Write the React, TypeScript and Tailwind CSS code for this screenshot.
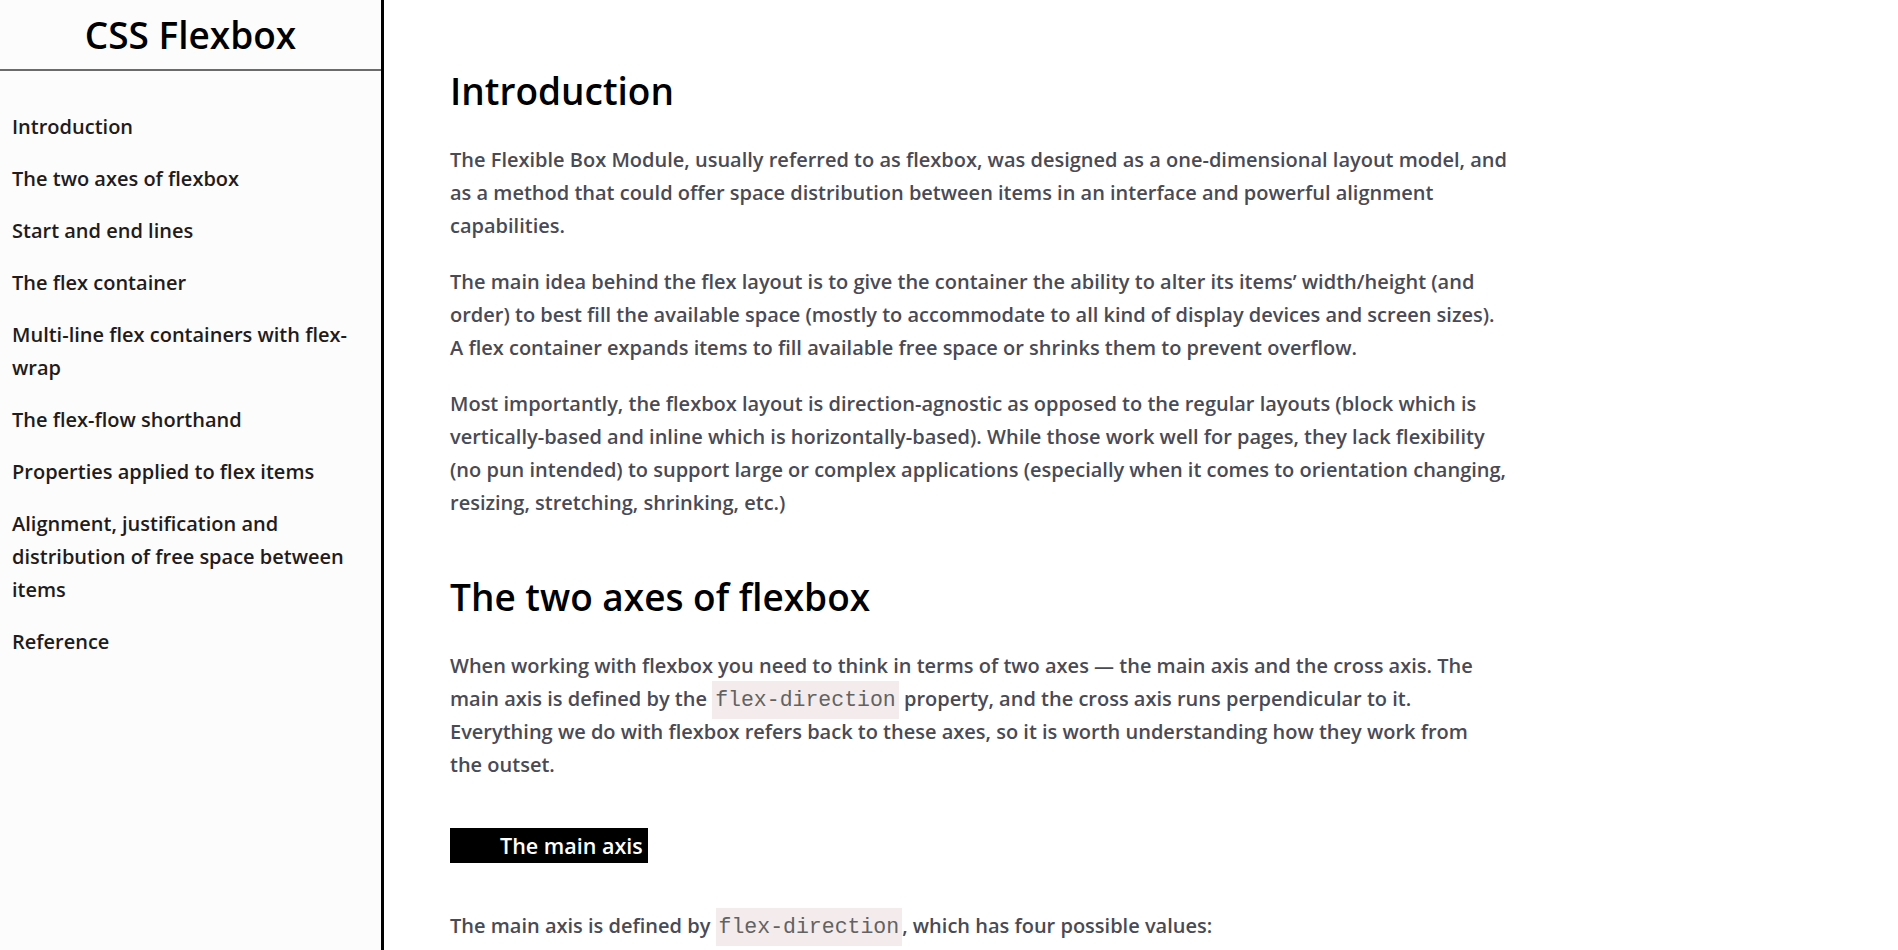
import React from "react";

const navItems = [
	"Introduction",
	"The two axes of flexbox",
	"Start and end lines",
	"The flex container",
	"Multi-line flex containers with flex-wrap",
	"The flex-flow shorthand",
	"Properties applied to flex items",
	"Alignment, justification and distribution of free space between items",
	"Reference",
];

const Code: React.FC<{ children: React.ReactNode }> = ({ children }) => (
	<code className="bg-[#f4ecec] px-[3px] py-[7px] font-['Liberation_Mono',monospace] text-[21.5px] font-normal leading-none text-[#626262]">
		{children}
	</code>
);

export default function App() {
	return (
		<div className="flex min-h-[950px] font-['Open_Sans',sans-serif]">
			<aside className="w-[384px] shrink-0 border-r-[3px] border-black bg-[#fcfcfc]">
				<header className="flex h-[71px] items-center justify-center border-b-2 border-[#6b6b6b]">
					<h1 className="text-[37px] font-semibold text-black">CSS Flexbox</h1>
				</header>
				<nav className="flex flex-col gap-[19px] pl-[12px] pr-[14px] pt-[39px]">
					{navItems.map((item) => (
						<a
							key={item}
							className="text-[20px] font-semibold leading-[33px] text-[#231b1b]"
						>
							{item}
						</a>
					))}
				</nav>
			</aside>
			<main className="flex-1 bg-white pl-[66px] pt-[69px]">
				<div className="w-[1120px] text-[20px] font-semibold leading-[33px] text-[#4a4a54]">
					<h2 className="mb-[30px] text-[37px] font-semibold leading-[44px] text-black">
						Introduction
					</h2>
					<p className="mb-[23px]">
						The Flexible Box Module, usually referred to as flexbox, was designed as a
						one-dimensional layout model, and
						<br />
						as a method that could offer space distribution between items in an interface
						and powerful alignment
						<br />
						capabilities.
					</p>
					<p className="mb-[23px]">
						The main idea behind the flex layout is to give the container the ability to
						alter its items’ width/height (and
						<br />
						order) to best fill the available space (mostly to accommodate to all kind of
						display devices and screen sizes).
						<br />A flex container expands items to fill available free space or shrinks
						them to prevent overflow.
					</p>
					<p>
						Most importantly, the flexbox layout is direction-agnostic as opposed to the
						regular layouts (block which is
						<br />
						vertically-based and inline which is horizontally-based). While those work
						well for pages, they lack flexibility
						<br />
						(no pun intended) to support large or complex applications (especially when
						it comes to orientation changing,
						<br />
						resizing, stretching, shrinking, etc.)
					</p>
					<h2 className="mb-[30px] mt-[56px] text-[37px] font-semibold leading-[44px] text-black">
						The two axes of flexbox
					</h2>
					<p>
						When working with flexbox you need to think in terms of two axes — the main
						axis and the cross axis. The
						<br />
						main axis is defined by the <Code>flex-direction</Code> property, and the
						cross axis runs perpendicular to it.
						<br />
						Everything we do with flexbox refers back to these axes, so it is worth
						understanding how they work from
						<br />
						the outset.
					</p>
					<h3 className="mt-[47px] mb-[46px] inline-block h-[35px] bg-black pl-[50px] pr-[5px] text-[21.5px] font-semibold leading-[35px] text-white">
						The main axis
					</h3>
					<p>
						The main axis is defined by <Code>flex-direction</Code>, which has four
						possible values:
					</p>
				</div>
			</main>
		</div>
	);
}
